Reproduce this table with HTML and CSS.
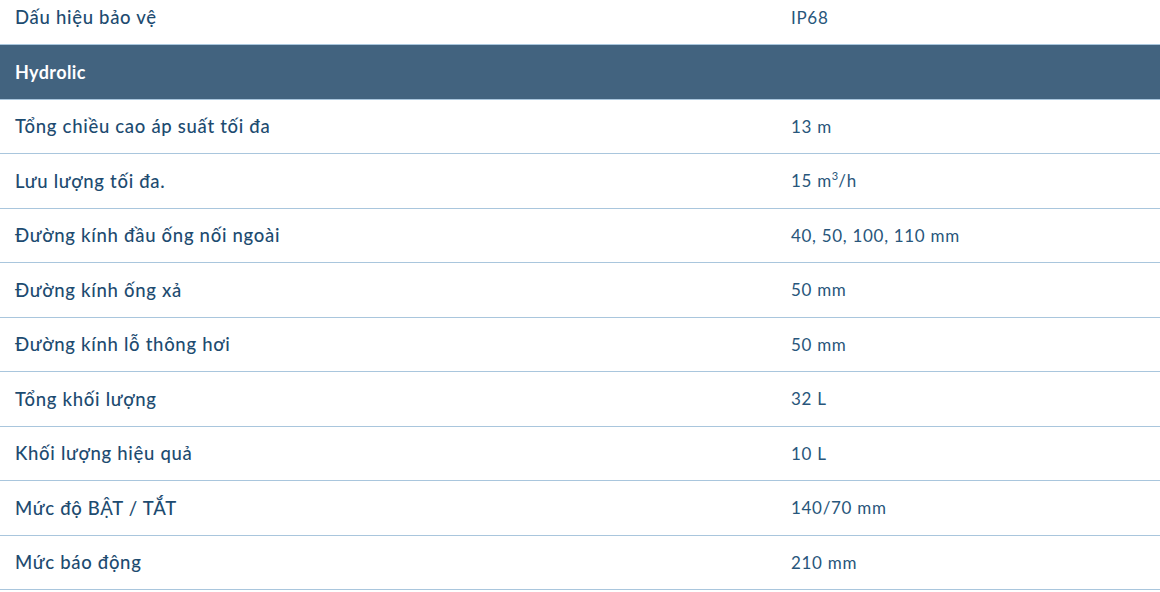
FILE: index.html
```html
<!DOCTYPE html>
<html lang="vi">
<head>
<meta charset="utf-8">
<link rel="stylesheet" href="styles.css">
</head>
<body>
<div class="wrap">
<table class="specs">
  <colgroup><col class="c-name"><col class="c-val"></colgroup>
  <tbody>
    <tr><td>Dấu hiệu bảo vệ</td><td class="val">IP68</td></tr>
    <tr class="group"><th colspan="2">Hydrolic</th></tr>
    <tr><td>Tổng chiều cao áp suất tối đa</td><td class="val">13 m</td></tr>
    <tr><td>Lưu lượng tối đa.</td><td class="val">15 m<sup>3</sup>/h</td></tr>
    <tr><td>Đường kính đầu ống nối ngoài</td><td class="val">40, 50, 100, 110 mm</td></tr>
    <tr><td>Đường kính ống xả</td><td class="val">50 mm</td></tr>
    <tr><td>Đường kính lỗ thông hơi</td><td class="val">50 mm</td></tr>
    <tr><td>Tổng khối lượng</td><td class="val">32 L</td></tr>
    <tr><td>Khối lượng hiệu quả</td><td class="val">10 L</td></tr>
    <tr><td>Mức độ BẬT / TẮT</td><td class="val">140/70 mm</td></tr>
    <tr><td>Mức báo động</td><td class="val">210 mm</td></tr>
  </tbody>
</table>
</div>
</body>
</html>
```
FILE: styles.css
```css
html, body {
  margin: 0;
  padding: 0;
  background: #ffffff;
  overflow: hidden;
}
.wrap {
  margin-top: -10px;
}
.specs {
  width: 1160px;
  border-collapse: collapse;
  table-layout: fixed;
  font-family: "Lato", "Open Sans", sans-serif;
  color: #1d4b70;
}
.c-name { width: 776px; }
.specs td, .specs th {
  height: 54.5px;
  box-sizing: border-box;
  padding: 0 15px;
  border-bottom: 1px solid #a9c6dd;
  text-align: left;
  vertical-align: middle;
  font-size: 18.5px;
  font-weight: 500;
  letter-spacing: 0.7px;
}
.specs td.val {
  font-size: 17px;
  font-weight: 400;
  color: #28567b;
  letter-spacing: 0.7px;
}
.specs sup {
  font-size: 11px;
  line-height: 0;
  letter-spacing: 0;
}
.group th {
  background: #42637f;
  color: #ffffff;
  font-size: 18px;
  font-weight: 700;
  letter-spacing: 0.4px;
}
```
